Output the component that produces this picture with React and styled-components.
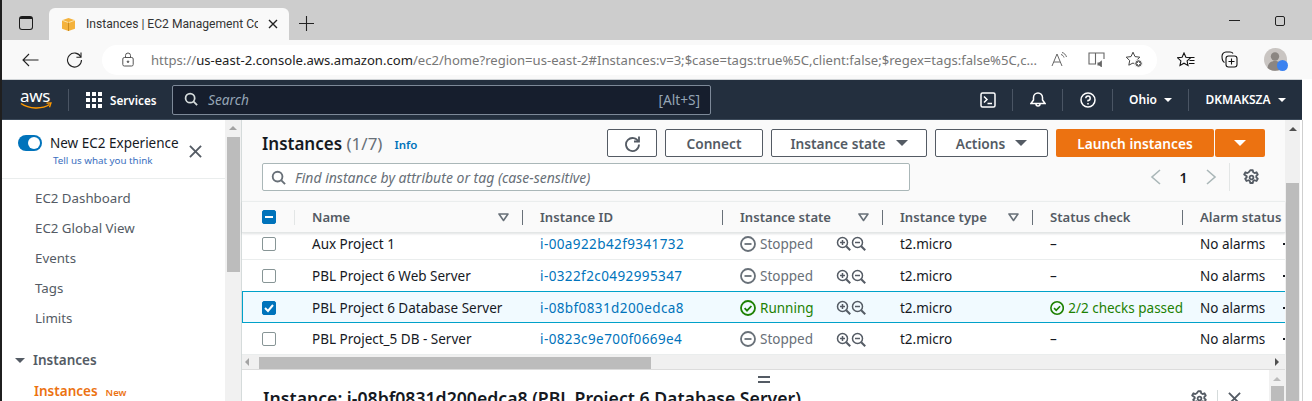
import styled, { createGlobalStyle } from "styled-components";

const GlobalStyle = createGlobalStyle`
  html, body {
    margin: 0;
    padding: 0;
    background: #fff;
    overflow: hidden;
  }
  * {
    box-sizing: border-box;
  }
`;

const font = `"Noto Sans", "Open Sans", sans-serif`;

const Window = styled.div`
  width: 1312px;
  height: 401px;
  overflow: hidden;
  display: flex;
  flex-direction: column;
  font-family: ${font};
  border-left: 2px solid #1f1f1f;
  background: #fff;
`;

const TabStrip = styled.div`
  height: 40px;
  flex: none;
  background: #cdcdcd;
  display: flex;
  align-items: flex-end;
  padding-left: 17px;
`;

const TabToggle = styled.div`
  width: 14px;
  height: 14px;
  border: 1.4px solid #1c1c1c;
  border-radius: 3px;
  border-top-width: 3px;
  margin-bottom: 10px;
  margin-right: 16px;
`;

const Tab = styled.div`
  width: 240px;
  height: 32px;
  background: #f9f9f9;
  border-radius: 6px 6px 0 0;
  display: flex;
  align-items: center;
  padding-left: 12px;
  font-family: Roboto, sans-serif;
  font-size: 12.1px;
  color: #333;
`;

const TabTitle = styled.span`
  width: 172px;
  margin-left: 10px;
  margin-right: 10px;
  white-space: nowrap;
  overflow: hidden;
`;

const NewTab = styled.div`
  margin: 0 0 5px 10px;
  height: 24px;
  display: flex;
  align-items: center;
`;

const WindowControls = styled.div`
  margin-left: auto;
  margin-right: 27px;
  height: 40px;
  display: flex;
  align-items: center;
  gap: 35px;
`;

const Minimize = styled.div`
  width: 11px;
  height: 1px;
  background: #222;
  margin-top: 1px;
`;

const Maximize = styled.div`
  width: 10px;
  height: 10px;
  border: 1px solid #222;
  border-radius: 2px;
  margin-top: 1px;
`;

const Toolbar = styled.div`
  height: 39px;
  flex: none;
  background: #f9f9f9;
  display: flex;
  align-items: center;
  padding-left: 20px;
`;

const ToolButton = styled.div`
  width: 44px;
  display: flex;
  align-items: center;
`;

const AddressBar = styled.div`
  width: 1055px;
  height: 30px;
  margin-left: -8px;
  background: #fff;
  border-radius: 15px;
  display: flex;
  align-items: center;
  padding-left: 20px;
  font-size: 13.1px;
  color: #777;
  white-space: nowrap;
`;

const Url = styled.span`
  flex: 1;
  min-width: 0;
  margin-left: 17px;
  overflow: hidden;
`;

const UrlHost = styled.span`
  color: #222;
`;

const AddressIcons = styled.div`
  display: flex;
  align-items: center;
  gap: 20px;
  padding: 0 14px 0 14px;
`;

const ToolIcons = styled.div`
  display: flex;
  align-items: center;
  gap: 26px;
  margin-left: 20px;
`;

const Avatar = styled.div`
  position: relative;
  width: 23px;
  height: 23px;
  border-radius: 50%;
  background: #c9c5c2;
`;

const AvatarBadge = styled.div`
  position: absolute;
  right: -1px;
  bottom: 0;
  width: 11px;
  height: 11px;
  border-radius: 50%;
  background: #3b82f0;
`;

const NavBar = styled.div`
  width: 1300px;
  height: 41px;
  flex: none;
  background: #232f3e;
  border-top: 1px solid #cfd3d6;
  border-bottom: 1px solid #3c4a5a;
  display: flex;
  align-items: center;
  color: #fff;
  font-size: 12px;
  font-weight: 600;
`;

const Logo = styled.div`
  width: 66px;
  padding-left: 18px;
  display: flex;
  flex-direction: column;
  line-height: 13px;
  font-size: 17px;
  font-weight: 400;
  letter-spacing: -0.3px;
`;

const NavDivider = styled.div`
  width: 1px;
  height: 22px;
  background: #4a5564;
`;

const AppGrid = styled.div`
  display: grid;
  grid-template-columns: repeat(3, 4px);
  grid-auto-rows: 4px;
  gap: 2px;
  margin: 0 8px 0 17px;
`;

const AppDot = styled.div`
  background: #fff;
`;

const ServicesLabel = styled.span`
  font-size: 11.7px;
  width: 45px;
  white-space: nowrap;
`;

const SearchBox = styled.div`
  width: 539px;
  height: 30px;
  margin-left: 17px;
  background: #161e2d;
  border: 1px solid #7d8998;
  border-radius: 2px;
  display: flex;
  align-items: center;
  padding: 0 10px 1px 11px;
  color: #95a5b5;
  font-size: 13.7px;
  font-weight: 400;
`;

const SearchHint = styled.em`
  margin-left: 10px;
  flex: 1;
`;

const NavRight = styled.div`
  margin-left: auto;
  display: flex;
  align-items: center;
`;

const NavIcon = styled.div`
  width: ${(p) => p.$w || 49}px;
  display: flex;
  justify-content: center;
`;

const NavMenu = styled.div`
  display: flex;
  align-items: center;
  justify-content: center;
  gap: 7px;
  width: ${(p) => p.$w}px;
  white-space: nowrap;
`;

const Caret = styled.span`
  width: 0;
  height: 0;
  border-left: ${(p) => p.$s || 4}px solid transparent;
  border-right: ${(p) => p.$s || 4}px solid transparent;
  border-top: ${(p) => (p.$s || 4) * 1.15}px solid ${(p) => p.$c || "#fff"};
`;

const Body = styled.div`
  flex: 1;
  min-height: 0;
  display: flex;
`;

const Sidebar = styled.aside`
  width: 223px;
  flex: none;
  background: #fff;
  color: #545b64;
  font-size: 13.3px;
`;

const Experience = styled.div`
  height: 59px;
  border-bottom: 1px solid #eaeded;
  padding: 13px 0 0 16px;
  display: flex;
`;

const Toggle = styled.div`
  width: 24px;
  height: 16px;
  margin-top: 2px;
  border-radius: 8px;
  background: #0073bb;
  display: flex;
  justify-content: flex-end;
  align-items: center;
  padding-right: 2px;
`;

const Knob = styled.div`
  width: 12px;
  height: 12px;
  border-radius: 50%;
  background: #fff;
`;

const ExperienceText = styled.div`
  margin-left: 8px;
  width: 136px;
  white-space: nowrap;
`;

const ExperienceTitle = styled.div`
  color: #16191f;
  font-size: 13.5px;
  line-height: 20px;
`;

const Feedback = styled.div`
  color: #3a6fc0;
  font-size: 9.8px;
  line-height: 14px;
  margin-top: 1px;
  margin-left: 3px;
`;

const CloseWrap = styled.div`
  margin: 11px 0 0 3px;
`;

const SideList = styled.nav`
  padding: 4px 0 0 33px;
`;

const SideItem = styled.div`
  height: 30px;
  line-height: 30px;
`;

const SideGroup = styled.div`
  display: flex;
  align-items: center;
  margin: 12px 0 0 13px;
  height: 30px;
  font-weight: 600;
  font-size: 13.5px;
  gap: 8px;
  color: #545b64;
`;

const SideActive = styled.div`
  display: flex;
  align-items: baseline;
  margin: 1px 0 0 32px;
  height: 30px;
  line-height: 30px;
  font-weight: 600;
  font-size: 13.5px;
  color: #ec7211;
  gap: 8px;
`;

const SideNew = styled.span`
  font-size: 9.5px;
`;

const ScrollTrack = styled.div`
  width: ${(p) => p.$w || 17}px;
  flex: none;
  background: #f1f1f1;
  border-right: ${(p) => (p.$edge ? "1px solid #d5dbdb" : "none")};
  display: flex;
  flex-direction: column;
  align-items: center;
`;

const ArrowUp = styled.div`
  flex: none;
  margin-top: ${(p) => p.$top || 6}px;
  width: 0;
  height: 0;
  border-left: 4px solid transparent;
  border-right: 4px solid transparent;
  border-bottom: 4px solid ${(p) => p.$c || "#a3a3a3"};
`;

const ScrollThumb = styled.div`
  flex: none;
  width: 13px;
  height: ${(p) => p.$h}px;
  margin-top: ${(p) => p.$top}px;
  background: #bcbcbc;
`;

const Main = styled.main`
  width: 1043px;
  flex: none;
  min-width: 0;
  display: flex;
  flex-direction: column;
`;

const Panel = styled.section`
  flex: none;
  background: #fafafa;
`;

const PanelHeader = styled.div`
  height: 81px;
  padding: 9px 20px 0 20px;
  background: #fafafa;
`;

const TitleRow = styled.div`
  display: flex;
  align-items: center;
  height: 28px;
`;

const Title = styled.h2`
  margin: 0;
  font-size: 17px;
  font-weight: 600;
  color: #16191f;
  white-space: nowrap;
`;

const Count = styled.span`
  font-weight: 400;
  color: #687078;
`;

const InfoLink = styled.span`
  color: #0073bb;
  font-size: 11.5px;
  font-weight: 600;
  margin-left: 12px;
  margin-top: 2px;
`;

const Actions = styled.div`
  margin-left: auto;
  display: flex;
  gap: 8px;
`;

const Button = styled.div`
  width: ${(p) => p.$w}px;
  height: 28px;
  background: #fff;
  border: 1px solid #545b64;
  border-radius: 2px;
  color: #545b64;
  font-size: 13.7px;
  font-weight: 600;
  display: flex;
  align-items: center;
  justify-content: center;
  gap: 10px;
  white-space: nowrap;
`;

const LaunchGroup = styled.div`
  display: flex;
  gap: 1px;
`;

const PrimaryButton = styled.div`
  width: ${(p) => p.$w}px;
  height: 28px;
  background: #ec7211;
  border-radius: 2px;
  color: #fff;
  font-size: 13.7px;
  font-weight: 600;
  display: flex;
  align-items: center;
  justify-content: center;
`;

const FilterRow = styled.div`
  display: flex;
  align-items: center;
  margin-top: 6px;
  height: 28px;
`;

const FilterInput = styled.div`
  width: 648px;
  height: 28px;
  background: #fff;
  border: 1px solid #aab7b8;
  border-radius: 2px;
  display: flex;
  align-items: center;
  padding-left: 8px;
  color: #687078;
  font-size: 14px;
  font-style: italic;
  gap: 9px;
`;

const Pager = styled.div`
  margin-left: auto;
  display: flex;
  align-items: center;
  padding-right: 5px;
`;

const PageNumber = styled.span`
  width: 43px;
  text-align: center;
  font-size: 14px;
  font-weight: 600;
  color: #16191f;
`;

const PagerDivider = styled.div`
  width: 1px;
  height: 28px;
  background: #e3e6e6;
  margin: 0 13px 0 12px;
`;

const HeadRow = styled.div`
  display: grid;
  grid-template-columns: 53px 228px 200px 160px 150px 150px 102px;
  height: 32px;
  background: #fafafa;
  border-top: 1px solid #eaeded;
  border-bottom: 1px solid #e3e6e6;
  box-shadow: 0 1px 2px rgba(0, 28, 36, 0.12);
  position: relative;
  z-index: 1;
`;

const HeadCell = styled.div`
  display: flex;
  align-items: center;
  padding: 0 14px 0 17px;
  font-size: 13.1px;
  font-weight: 600;
  color: #545b64;
  white-space: nowrap;
  overflow: hidden;
  justify-content: space-between;
  position: relative;
  &::after {
    content: "";
    display: ${(p) => (p.$last ? "none" : "block")};
    position: absolute;
    right: 0;
    top: 8px;
    height: 15px;
    width: 1px;
    background: #687078;
  }
`;

const CheckCell = styled.div`
  display: flex;
  align-items: center;
  padding-left: 20px;
`;

const HeadSep = styled.div`
  width: 1px;
  height: 15px;
  background: #e3e6e6;
  margin-left: auto;
`;

const Check = styled.div`
  width: 14px;
  height: 14px;
  border-radius: 2px;
  border: 1px solid ${(p) => (p.$on ? "#0073bb" : "#879596")};
  background: ${(p) => (p.$on ? "#0073bb" : "#fff")};
  display: flex;
  align-items: center;
  justify-content: center;
`;

const Row = styled.div`
  display: grid;
  grid-template-columns: 53px 228px 200px 160px 150px 150px 102px;
  height: ${(p) => p.$h || 32}px;
  padding-top: ${(p) => (p.$h ? 0 : 1)}px;
  padding-bottom: ${(p) => (p.$h ? 5 : 0)}px;
  background: ${(p) => (p.$on ? "#f1faff" : "#fff")};
  border-bottom: 1px solid ${(p) => (p.$on ? "#00a1c9" : "#eaeded")};
  border-top: ${(p) => (p.$on ? "1px solid #00a1c9" : "none")};
  box-shadow: ${(p) => (p.$on ? "inset 1px 0 0 #00a1c9" : "none")};
  margin-top: ${(p) => (p.$on ? -1 : 0)}px;
  color: #16191f;
  font-size: 13.5px;
`;

const Cell = styled.div`
  display: flex;
  align-items: center;
  padding-left: 17px;
  white-space: nowrap;
  overflow: hidden;
  gap: 4px;
  justify-content: ${(p) => (p.$spread ? "space-between" : "flex-start")};
`;

const IdLink = styled.span`
  color: #0073bb;
  letter-spacing: 0.4px;
`;

const State = styled.span`
  color: ${(p) => (p.$on ? "#1d8102" : "#687078")};
`;

const ZoomIcons = styled.span`
  display: flex;
  margin-left: auto;
  margin-right: 17px;
`;

const StatusText = styled.span`
  color: #1d8102;
`;

const RowDot = styled.span`
  width: 2px;
  height: 2px;
  background: #16191f;
`;

const HScroll = styled.div`
  height: 15px;
  background: #f0f0f0;
  border-bottom: 1px solid #dcdcdc;
  display: flex;
  align-items: center;
`;

const ArrowSide = styled.div`
  width: 0;
  height: 0;
  margin-left: ${(p) => p.$ml || 0}px;
  border-top: 4px solid transparent;
  border-bottom: 4px solid transparent;
  ${(p) => (p.$right ? `border-left: 4px solid #505050;` : `border-right: 4px solid #a3a3a3;`)}
`;

const HThumb = styled.div`
  width: 392px;
  height: 12px;
  margin-left: 10px;
  align-self: flex-end;
  background: #bcbcbc;
`;

const Details = styled.section`
  flex: 1;
  min-height: 0;
  display: flex;
  background: #fff;
`;

const DetailsMain = styled.div`
  flex: 1;
  min-width: 0;
  padding: 0 0 0 21px;
`;

const Handle = styled.div`
  width: 12px;
  height: 7px;
  margin: 6px 0 0 495px;
  border-top: 2px solid #545b64;
  border-bottom: 2px solid #545b64;
`;

const DetailsHead = styled.div`
  display: flex;
  align-items: center;
  margin-top: 3px;
`;

const DetailsTitle = styled.h3`
  margin: 0;
  font-size: 17.65px;
  font-weight: 600;
  color: #16191f;
  white-space: nowrap;
`;

const DetailTools = styled.div`
  margin-left: auto;
  display: flex;
  align-items: center;
  margin-right: 28px;
`;

const ToolSep = styled.div`
  width: 1px;
  height: 16px;
  background: #d5dbdb;
  margin: 0 10px 0 9px;
`;

const Frame = styled.div`
  flex: 1;
  min-width: 0;
  display: flex;
`;

const PageScroll = styled.div`
  width: 15px;
  flex: none;
  background: #f0f0f0;
  display: flex;
  flex-direction: column;
  align-items: center;
  box-shadow: 2px 0 0 #fff, 3px 0 0 #cfcfcf;
`;

const Gear = ({ size = 17, color = "#545b64" }) => (
  <svg width={size} height={size} viewBox="0 0 16 16" fill="none" stroke={color} strokeWidth="1.7">
    <path d="M6.8 1.2h2.4l.4 1.9 1.3.7 1.8-.7 1.2 2.1-1.4 1.3v1.4l1.4 1.3-1.2 2.1-1.8-.7-1.3.7-.4 1.9H6.8l-.4-1.9-1.3-.7-1.8.7-1.2-2.1 1.4-1.3V6.9L1.1 5.2l1.2-2.1 1.8.7 1.3-.7z" strokeLinejoin="round" />
    <circle cx="8" cy="8" r="1.8" />
  </svg>
);

const CloseIcon = ({ size = 13 }) => (
  <svg width={size} height={size} viewBox="0 0 14 14" stroke="#545b64" strokeWidth="2" fill="none">
    <path d="M1 1l12 12M13 1L1 13" />
  </svg>
);

const MagnifierIcon = ({ size = 16, color = "#545b64" }) => (
  <svg width={size} height={size} viewBox="0 0 16 16" fill="none" stroke={color} strokeWidth="2">
    <circle cx="7" cy="7" r="5.2" />
    <path d="M11 11l4 4" />
  </svg>
);

const StatusIcon = ({ on }) => (
  <svg width="16" height="16" viewBox="0 0 16 16" fill="none" stroke={on ? "#1d8102" : "#687078"} strokeWidth="1.8">
    <circle cx="8" cy="8" r="7" />
    {on ? <path d="M4.6 8.2l2.4 2.4 4.4-4.6" /> : <path d="M4.5 8h7" />}
  </svg>
);

const ZoomGlass = ({ plus }) => (
  <svg width="15" height="15" viewBox="0 0 15 15" fill="none" stroke="#545b64" strokeWidth="1.5">
    <circle cx="6.5" cy="6.5" r="5" />
    <path d="M10.2 10.2l4 4" strokeWidth="2" />
    <path d="M4 6.5h5" />
    {plus && <path d="M6.5 4v5" />}
  </svg>
);

const FilterCaret = () => (
  <svg width="11" height="9" viewBox="0 0 11 9" fill="none" stroke="#687078" strokeWidth="1.6">
    <path d="M1 1h9L5.5 7.5z" strokeLinejoin="round" />
  </svg>
);

const AwsLogoSmile = () => (
  <svg width="32" height="8" viewBox="0 0 32 8" fill="none">
    <path d="M1 1.5C9 7 22 7.5 29.5 2.5" stroke="#ff9900" strokeWidth="1.5" />
    <path d="M26.5 1.2l4.5-.2-1.5 4.2" stroke="#ff9900" strokeWidth="1.3" />
  </svg>
);

const columns = [
  { label: "Name", filter: true },
  { label: "Instance ID" },
  { label: "Instance state", filter: true },
  { label: "Instance type", filter: true },
  { label: "Status check" },
  { label: "Alarm status", last: true },
];

const instances = [
  { name: "Aux Project 1", id: "i-00a922b42f9341732", h: 27 },
  { name: "PBL Project 6 Web Server", id: "i-0322f2c0492995347" },
  { name: "PBL Project 6 Database Server", id: "i-08bf0831d200edca8", on: true },
  { name: "PBL Project_5 DB - Server", id: "i-0823c9e700f0669e4" },
];

const sideItems = ["EC2 Dashboard", "EC2 Global View", "Events", "Tags", "Limits"];

const App = () => {
  return (
    <>
      <GlobalStyle />
      <Window>
        <TabStrip>
          <TabToggle />
          <Tab>
            <svg width="15" height="15" viewBox="0 0 15 15">
              <path d="M7.5 1L14 3.2v8.6L7.5 14 1 11.8V3.2z" fill="#f4b23c" />
              <path d="M1 3.2L7.5 5.6 14 3.2" stroke="#fbe2a8" strokeWidth="1" fill="none" />
              <path d="M7.5 5.6V14" stroke="#c98a1d" strokeWidth="1" />
            </svg>
            <TabTitle>Instances | EC2 Management Console</TabTitle>
            <svg width="10" height="10" viewBox="0 0 10 10" stroke="#222" strokeWidth="1.4">
              <path d="M1 1l8 8M9 1L1 9" />
            </svg>
          </Tab>
          <NewTab>
            <svg width="15" height="15" viewBox="0 0 15 15" stroke="#222" strokeWidth="1.1">
              <path d="M7.5 0v15M0 7.5h15" />
            </svg>
          </NewTab>
          <WindowControls>
            <Minimize />
            <Maximize />
          </WindowControls>
        </TabStrip>

        <Toolbar>
          <ToolButton>
            <svg width="17" height="14" viewBox="0 0 17 14" fill="none" stroke="#222" strokeWidth="1.1">
              <path d="M16.5 7H1M7 1L1 7l6 6" />
            </svg>
          </ToolButton>
          <ToolButton>
            <svg width="17" height="17" viewBox="0 0 17 17" fill="none" stroke="#222" strokeWidth="1.1">
              <path d="M14.8 6A7 7 0 1 0 15.5 9" />
              <path d="M15 1.5V6.2H10.4" />
            </svg>
          </ToolButton>
          <AddressBar>
            <svg width="12" height="15" viewBox="0 0 12 15" fill="none" stroke="#555" strokeWidth="1">
              <rect x="0.8" y="5.5" width="10.4" height="8.5" rx="1.5" />
              <path d="M3.5 5.5V3.5a2.5 2.5 0 0 1 5 0v2" />
              <circle cx="6" cy="9.7" r="0.8" fill="#555" />
            </svg>
            <Url>
              https://<UrlHost>us-east-2.console.aws.amazon.com</UrlHost>/ec2/home?region=us-east-2#Instances:v=3;$case=tags:true%5C,client:false;$regex=tags:false%5C,c...
            </Url>
            <AddressIcons>
              <svg width="17" height="15" viewBox="0 0 17 15" fill="none" stroke="#666" strokeWidth="1">
                <path d="M1 14L6 2l5 12M3 10h6" />
                <path d="M10 2.5c1.5.4 2.5 1.5 3 3M11 .5c2.2.5 3.8 2.2 4.5 4.5" />
              </svg>
              <svg width="17" height="15" viewBox="0 0 17 15" fill="none" stroke="#666" strokeWidth="1.1">
                <path d="M1 1h6.5v11H1zM7.5 1H16v6M7.5 1v11" />
                <path d="M10 11h1.5l1.8-1.6v5L11.5 13H10z" fill="#666" />
              </svg>
              <svg width="18" height="17" viewBox="0 0 18 17" fill="none" stroke="#444" strokeWidth="1">
                <path d="M8 1.2l2 4.4 4.8.6-3.5 3.3.9 4.7L8 12l-4.2 2.2.9-4.7L1.2 6.2 6 5.6z" />
                <circle cx="13.5" cy="12.5" r="3.8" fill="#666" stroke="#fff" />
                <path d="M11.8 12.5h3.4M13.5 10.8v3.4" stroke="#fff" />
              </svg>
            </AddressIcons>
          </AddressBar>
          <ToolIcons>
            <svg width="18" height="16" viewBox="0 0 18 16" fill="none" stroke="#111" strokeWidth="1.1">
              <path d="M7 1l1.9 4.3 4.6.5-3.4 3.1.9 4.6L7 11.2 3 13.5l.9-4.6L.5 5.8l4.6-.5z" />
              <path d="M12 5.5h5.5M12.5 8.5h5M12 11.5h5.5" />
            </svg>
            <svg width="17" height="17" viewBox="0 0 17 17" fill="none" stroke="#111" strokeWidth="1.1">
              <path d="M3.5 11.5C1.5 10.5 1 8 1 5.5S2.5 1 5 1h4c1.5 0 2.5.5 3 1.5" />
              <rect x="5" y="5" width="11" height="11" rx="2.5" fill="#f9f9f9" />
              <path d="M10.5 7.5v6M7.5 10.5h6" />
            </svg>
            <Avatar>
              <svg width="23" height="23" viewBox="0 0 23 23">
                <circle cx="11" cy="8.5" r="4.2" fill="#8b8682" />
                <path d="M3.5 20c.5-5 3.5-7 7.5-7s7 2 7.5 7a11.5 11.5 0 0 1-15 0z" fill="#8b8682" />
              </svg>
              <AvatarBadge />
            </Avatar>
          </ToolIcons>
        </Toolbar>

        <NavBar>
          <Logo>
            <span>aws</span>
            <AwsLogoSmile />
          </Logo>
          <NavDivider />
          <AppGrid>
            {Array.from({ length: 9 }).map((_, i) => (
              <AppDot key={i} />
            ))}
          </AppGrid>
          <ServicesLabel>Services</ServicesLabel>
          <SearchBox>
            <MagnifierIcon size={14} color="#d5dbdb" />
            <SearchHint>Search</SearchHint>
            <span>[Alt+S]</span>
          </SearchBox>
          <NavRight>
            <NavIcon>
              <svg width="16" height="16" viewBox="0 0 16 16" fill="none" stroke="#fff" strokeWidth="1.5">
                <rect x="1" y="1" width="14" height="14" rx="1.5" />
                <path d="M4 4.5L7 7.5 4 10.5M7.5 11.5h4.5" />
              </svg>
            </NavIcon>
            <NavDivider />
            <NavIcon>
              <svg width="16" height="17" viewBox="0 0 16 17" fill="none" stroke="#fff" strokeWidth="1.5">
                <path d="M1 12.5h14L12.5 9V6.5a4.5 4.5 0 0 0-9 0V9z" />
                <path d="M6 13a2 2 0 0 0 4 0" />
              </svg>
            </NavIcon>
            <NavDivider />
            <NavIcon>
              <svg width="16" height="16" viewBox="0 0 16 16" fill="none" stroke="#fff" strokeWidth="1.5">
                <circle cx="8" cy="8" r="7" />
                <path d="M5.8 6.2A2.2 2.2 0 1 1 8 8.4v1.2M8 11v1.4" />
              </svg>
            </NavIcon>
            <NavDivider />
            <NavMenu $w={75}>
              Ohio <Caret />
            </NavMenu>
            <NavDivider />
            <NavMenu $w={113}>
              DKMAKSZA <Caret />
            </NavMenu>
          </NavRight>
        </NavBar>

        <Body>
          <Sidebar>
            <Experience>
              <Toggle>
                <Knob />
              </Toggle>
              <ExperienceText>
                <ExperienceTitle>New EC2 Experience</ExperienceTitle>
                <Feedback>Tell us what you think</Feedback>
              </ExperienceText>
              <CloseWrap>
                <CloseIcon />
              </CloseWrap>
            </Experience>
            <SideList>
              {sideItems.map((item) => (
                <SideItem key={item}>{item}</SideItem>
              ))}
            </SideList>
            <SideGroup>
              <Caret $s={5} $c="#545b64" />
              Instances
            </SideGroup>
            <SideActive>
              Instances <SideNew>New</SideNew>
            </SideActive>
          </Sidebar>
          <ScrollTrack $edge>
            <ArrowUp />
            <ScrollThumb $top={7} $h={135} />
          </ScrollTrack>
          <Frame>
            <Main>
              <Panel>
                <PanelHeader>
                  <TitleRow>
                    <Title>
                      Instances <Count>(1/7)</Count>
                    </Title>
                    <InfoLink>Info</InfoLink>
                    <Actions>
                      <Button $w={50}>
                        <svg width="17" height="17" viewBox="0 0 17 17" fill="none" stroke="#545b64" strokeWidth="1.8">
                          <path d="M14.5 7A6.5 6.5 0 1 0 15 9.5" />
                          <path d="M15 1.5V6.5H10" />
                        </svg>
                      </Button>
                      <Button $w={98}>Connect</Button>
                      <Button $w={156}>
                        Instance state <Caret $s={6} $c="#545b64" />
                      </Button>
                      <Button $w={113}>
                        Actions <Caret $s={6} $c="#545b64" />
                      </Button>
                      <LaunchGroup>
                        <PrimaryButton $w={158}>Launch instances</PrimaryButton>
                        <PrimaryButton $w={50}>
                          <Caret $s={6} />
                        </PrimaryButton>
                      </LaunchGroup>
                    </Actions>
                  </TitleRow>
                  <FilterRow>
                    <FilterInput>
                      <MagnifierIcon size={15} color="#687078" />
                      Find instance by attribute or tag (case-sensitive)
                    </FilterInput>
                    <Pager>
                      <svg width="12" height="16" viewBox="0 0 12 16" fill="none" stroke="#aab7b8" strokeWidth="1.6">
                        <path d="M10 1L2 8l8 7" />
                      </svg>
                      <PageNumber>1</PageNumber>
                      <svg width="12" height="16" viewBox="0 0 12 16" fill="none" stroke="#aab7b8" strokeWidth="1.6">
                        <path d="M2 1l8 7-8 7" />
                      </svg>
                      <PagerDivider />
                      <Gear />
                    </Pager>
                  </FilterRow>
                </PanelHeader>
                <HeadRow>
                  <CheckCell>
                    <Check $on>
                      <svg width="10" height="10" viewBox="0 0 10 10" stroke="#fff" strokeWidth="2">
                        <path d="M1 5h8" />
                      </svg>
                    </Check>
                    <HeadSep />
                  </CheckCell>
                  {columns.map((c) => (
                    <HeadCell key={c.label} $last={c.last}>
                      {c.label}
                      {c.filter && <FilterCaret />}
                    </HeadCell>
                  ))}
                </HeadRow>
                {instances.map((row) => (
                  <Row key={row.id} $on={row.on} $h={row.h}>
                    <CheckCell>
                      <Check $on={row.on}>
                        {row.on && (
                          <svg width="10" height="10" viewBox="0 0 10 10" fill="none" stroke="#fff" strokeWidth="2">
                            <path d="M1 5l3 3 5-6" />
                          </svg>
                        )}
                      </Check>
                    </CheckCell>
                    <Cell>{row.name}</Cell>
                    <Cell>
                      <IdLink>{row.id}</IdLink>
                    </Cell>
                    <Cell>
                      <StatusIcon on={row.on} />
                      <State $on={row.on}>{row.on ? "Running" : "Stopped"}</State>
                      <ZoomIcons>
                        <ZoomGlass plus />
                        <ZoomGlass />
                      </ZoomIcons>
                    </Cell>
                    <Cell>t2.micro</Cell>
                    <Cell>
                      {row.on ? (
                        <>
                          <StatusIcon on />
                          <StatusText>2/2 checks passed</StatusText>
                        </>
                      ) : (
                        "–"
                      )}
                    </Cell>
                    <Cell $spread>
                      No alarms
                      <RowDot />
                    </Cell>
                  </Row>
                ))}
                <HScroll>
                  <ArrowSide $ml={3} />
                  <HThumb />
                  <ArrowSide $right $ml={624} />
                </HScroll>
              </Panel>
              <Details>
                <DetailsMain>
                  <Handle />
                  <DetailsHead>
                    <DetailsTitle>Instance: i-08bf0831d200edca8 (PBL Project 6 Database Server)</DetailsTitle>
                    <DetailTools>
                      <Gear />
                      <ToolSep />
                      <CloseIcon size={13} />
                    </DetailTools>
                  </DetailsHead>
                </DetailsMain>
                <ScrollTrack $w={16}>
                  <ArrowUp $c="#bbb" $top={7} />
                  <ScrollThumb $top={5} $h={30} />
                </ScrollTrack>
              </Details>
            </Main>
            <PageScroll>
              <ArrowUp $c="#505050" $top={7} />
              <ScrollThumb $top={52} $h={220} />
            </PageScroll>
          </Frame>
        </Body>
      </Window>
    </>
  );
};

export default App;
